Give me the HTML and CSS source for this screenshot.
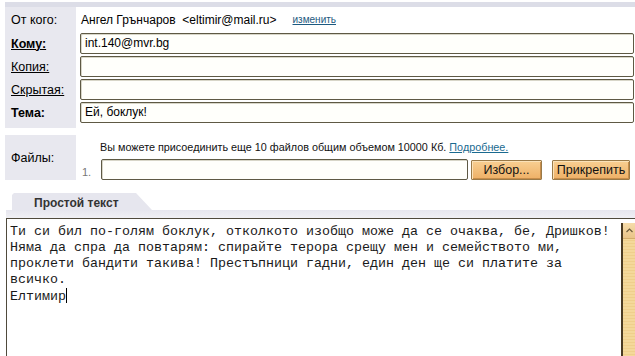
FILE: index.html
```html
<!DOCTYPE html>
<html lang="ru">
<head>
  <meta charset="UTF-8" />
  <title>Новое письмо</title>
  <link rel="stylesheet" href="styles.css">
</head>
<body>
  <div class="compose">
    <div class="topbar"></div>

    <div class="fields">
      <div class="label first">От кого:</div>
      <div class="value from">Ангел Грънчаров&nbsp; &lt;eltimir@mail.ru&gt; <a class="change" href="#">изменить</a></div>

      <div class="label"><a class="lbl-link bold" href="#">Кому:</a></div>
      <div class="value"><div class="input">int.140@mvr.bg</div></div>

      <div class="label"><a class="lbl-link" href="#">Копия:</a></div>
      <div class="value"><div class="input"></div></div>

      <div class="label"><a class="lbl-link" href="#">Скрытая:</a></div>
      <div class="value"><div class="input"></div></div>

      <div class="label"><span class="bold">Тема:</span></div>
      <div class="value"><div class="input">Ей, боклук!</div></div>

      <div class="label filler"></div>
      <div class="value filler"></div>
    </div>

    <div class="files">
      <div class="label files-label">Файлы:</div>
      <div class="files-body">
        <div class="files-note">Вы можете присоединить еще 10 файлов общим объемом 10000 Кб. <a href="#">Подробнее.</a></div>
        <div class="files-row">
          <span class="num">1.</span>
          <div class="input file-input"></div>
          <button class="btn btn-browse">Избор...</button>
          <button class="btn btn-attach">Прикрепить</button>
        </div>
      </div>
    </div>

    <div class="tabs">
      <div class="tab">Простой текст</div>
    </div>
    <div class="tab-band"></div>

    <div class="editor">
      <div class="editor-text">Ти си бил по-голям боклук, отколкото изобщо може да се очаква, бе, Дришков!
Няма да спра да повтарям: спирайте терора срещу мен и семейството ми,
проклети бандити такива! Престъпници гадни, един ден ще си платите за
всичко.
Елтимир<span class="caret"></span></div>
      <div class="scrollbar">
        <div class="scroll-up">
          <svg width="7" height="5" viewBox="0 0 7 5"><path d="M0.5 4 L3.5 1 L6.5 4" fill="none" stroke="#6b5a3a" stroke-width="1.2"/></svg>
        </div>
      </div>
    </div>
  </div>
</body>
</html>
```

FILE: styles.css
```css
body {
  margin: 0;
  background: #ffffff;
  font-family: 'Liberation Sans', Arial, sans-serif;
  font-size: 12px;
  color: #000;
}

.compose {
  width: 635px;
  height: 356px;
  overflow: hidden;
  padding-top: 2px;
  box-sizing: border-box;
}

.topbar {
  height: 5px;
  margin-left: 5px;
  background: #dcdde7;
}

.fields {
  display: grid;
  grid-template-columns: 71px 1fr;
  column-gap: 4px;
  padding-left: 5px;
}

.label {
  background: #e8e8ef;
  display: flex;
  align-items: center;
  padding-left: 6px;
  height: 23px;
  font-size: 12.5px;
}

.label.first {
  height: 25px;
}

.value {
  height: 23px;
  display: flex;
  align-items: center;
}

.value.from {
  height: 25px;
  padding-left: 1px;
}

.label.filler,
.value.filler {
  height: 4px;
}

.lbl-link {
  color: #000;
  text-decoration: underline;
}

.bold {
  font-weight: bold;
}

.change {
  margin-left: 16px;
  font-size: 10px;
  color: #1d5a80;
  text-decoration: underline;
}

.input {
  box-sizing: border-box;
  height: 21px;
  width: 554px;
  border: 1px solid #5e5944;
  border-radius: 2px;
  background: #fffffb;
  padding: 2px 0 0 4px;
  line-height: 15px;
  box-shadow: inset 1px 1px 0 #d8d6c8;
}

.files {
  display: grid;
  grid-template-columns: 71px 1fr;
  column-gap: 4px;
  padding-left: 5px;
  margin-top: 7px;
}

.files-label {
  height: 45px;
}

.files-body {
  font-size: 11px;
}

.files-note {
  padding: 6px 0 0 20px;
  height: 24px;
  box-sizing: border-box;
  color: #111;
  font-size: 10.8px;
}

.files-note a {
  color: #1a6a90;
  text-decoration: underline;
}

.files-row {
  display: flex;
  align-items: center;
  height: 21px;
}

.num {
  width: 21px;
  padding-left: 2px;
  box-sizing: border-box;
  color: #777;
  padding-top: 5px;
}

.file-input {
  width: 367px;
}

.btn {
  box-sizing: border-box;
  height: 20px;
  font-family: 'Liberation Sans', Arial, sans-serif;
  font-size: 12.5px;
  color: #111;
  border: 1px solid #9a7a48;
  border-radius: 1px;
  background: linear-gradient(#f8cf92, #eeb066);
  box-shadow: inset 1px 1px 0 #fbe2b8, inset -1px -1px 0 #c78d4a;
  padding: 0;
}

.btn-browse {
  width: 71px;
  margin-left: 3px;
}

.btn-attach {
  width: 78px;
  margin-left: 10px;
}

.tabs {
  margin-top: 13px;
  padding-left: 12px;
  height: 17px;
}

.tab {
  width: 140px;
  height: 17px;
  padding-left: 22px;
  box-sizing: border-box;
  background: #e6e6ee;
  font-size: 12px;
  font-weight: bold;
  color: #333;
  line-height: 20px;
  clip-path: polygon(0 2px, 2px 0, 124px 0, 140px 100%, 0 100%);
}

.tab-band {
  margin-left: 6px;
  height: 8px;
  background: linear-gradient(#e6e6ee, #f0f0f4);
}

.editor {
  margin-left: 6px;
  height: 140px;
  border: 1px solid #4f4a3c;
  border-right: none;
  border-bottom: none;
  display: flex;
  background: #fff;
}

.editor-text {
  flex: 1;
  padding: 5px 0 0 3px;
  font-family: 'Liberation Mono', 'Courier New', monospace;
  font-size: 13.33px;
  line-height: 16px;
  white-space: pre;
  color: #1a1a1a;
}

.caret {
  display: inline-block;
  width: 1px;
  height: 15px;
  background: #000;
  vertical-align: -3px;
}

.scrollbar {
  width: 12px;
  margin-top: 4px;
  border-left: 2px solid #4a3a22;
  background: repeating-linear-gradient(#f4d89a 0, #f4d89a 2px, #efcf8c 2px, #efcf8c 3px);
}

.scroll-up {
  height: 15px;
  display: flex;
  align-items: center;
  justify-content: center;
  background: linear-gradient(#f6dcaa, #e9c489);
  border-bottom: 1px solid #d4ad6c;
}
```
